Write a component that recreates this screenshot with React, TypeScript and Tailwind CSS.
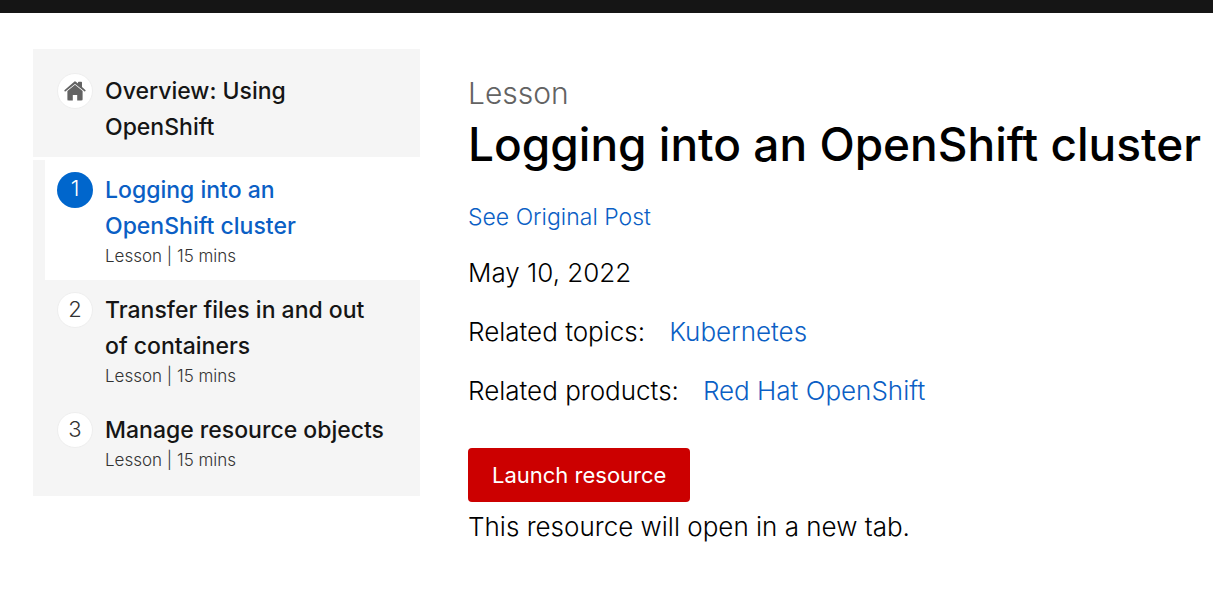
import React from "react";

type Lesson = { title: string; active?: boolean };

const lessons: Lesson[] = [
  { title: "Logging into an OpenShift cluster", active: true },
  { title: "Transfer files in and out of containers" },
  { title: "Manage resource objects" },
];

function HomeIcon() {
  return (
    <svg viewBox="0 0 22 20" className="h-5 w-[22px]" fill="#636363" aria-hidden="true">
      <path d="M11 1 1.2 9.6 11 1.8l9.8 7.8-3.6-3.2V1.6h-2.4v2.6z" stroke="#636363" strokeWidth="1.6" strokeLinejoin="round" />
      <path d="M11 3.8 3.4 10v8.2c0 .8.4 1.2 1.2 1.2h4.2V14h4.4v5.4h4.2c.8 0 1.2-.4 1.2-1.2V10z" />
    </svg>
  );
}

function LessonItem({ lesson, index }: { lesson: Lesson; index: number }) {
  const active = lesson.active;
  return (
    <li className={active ? "ml-3 bg-white py-3 pl-3" : "py-3 pl-6"}>
      <a href="#" className="flex gap-3 pr-8" aria-current={active ? "page" : undefined}>
        <span
          className={
            active
              ? "flex size-9 shrink-0 justify-center rounded-full bg-[#0066cc] text-[22px]/8 font-light text-white"
              : "flex size-9 shrink-0 justify-center rounded-full border border-[#eeeeee] bg-white text-[22px]/8 font-light text-[#333333]"
          }
        >
          {index}
        </span>
        <span className="min-w-0">
          <span className={active ? "block text-[23px]/9 font-medium text-[#0b5fc5]" : "block text-[23px]/9 font-medium text-[#151515]"}>
            {lesson.title}
          </span>
          <span className="block text-[17px]/6 font-light text-[#333333]">Lesson | 15 mins</span>
        </span>
      </a>
    </li>
  );
}

export default function App() {
  return (
    <div className="bg-white font-['Inter','Open_Sans',sans-serif] text-[#151515]">
      <header className="h-[13px] bg-[#151515]" />
      <div className="flex items-start gap-12 pt-9 pl-[33px]">
        <nav aria-label="Lessons" className="w-[387px] shrink-0 bg-[#f5f5f5]">
          <a href="#" className="flex gap-3 border-b-3 border-white pt-6 pr-8 pb-3 pl-6">
            <span className="flex size-9 shrink-0 items-center justify-center rounded-full border border-[#eeeeee] bg-white">
              <HomeIcon />
            </span>
            <span className="text-[23px]/9 font-medium">Overview: Using OpenShift</span>
          </a>
          <ol className="pb-3">
            {lessons.map((lesson, i) => (
              <LessonItem key={lesson.title} lesson={lesson} index={i + 1} />
            ))}
          </ol>
        </nav>
        <main className="min-w-0 flex-1 pt-6 text-[26px]/[42px] font-light text-black">
          <p className="text-3xl/10 text-[#636363]">Lesson</p>
          <h1 className="text-[46px]/[62px] font-medium">Logging into an OpenShift cluster</h1>
          <p className="mt-6 text-[23px]/9">
            <a href="#" className="text-[#0b5fc5]">See Original Post</a>
          </p>
          <p className="mt-[17px]">May 10, 2022</p>
          <p className="mt-[17px] flex gap-6">
            <span>Related topics:</span>
            <a href="#" className="text-[#0b5fc5]">Kubernetes</a>
          </p>
          <p className="mt-[17px] flex gap-6">
            <span>Related products:</span>
            <a href="#" className="text-[#0b5fc5]">Red Hat OpenShift</a>
          </p>
          <button type="button" className="mt-9 block rounded bg-[#cc0000] px-6 py-[9px] text-[22px]/9 font-normal text-white">Launch resource</button>
          <p className="mt-1">This resource will open in a new tab.</p>
        </main>
      </div>
    </div>
  );
}
